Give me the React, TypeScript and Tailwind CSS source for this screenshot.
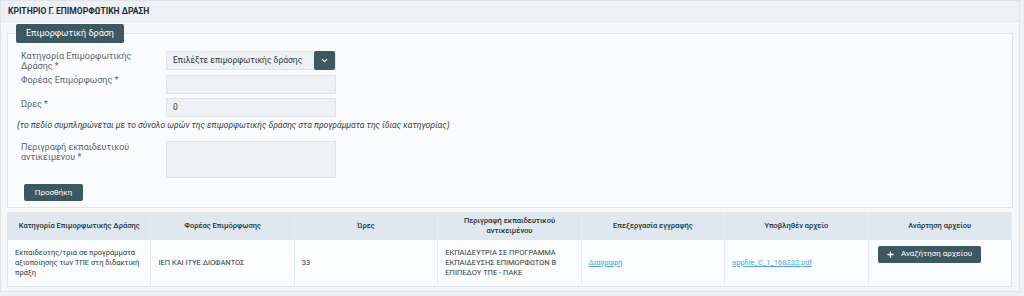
import { ChevronDown, Plus } from "lucide-react";

const headers: React.ReactNode[] = [
  "Κατηγορία Επιμορφωτικής Δράσης",
  "Φορέας Επιμόρφωσης",
  "Ώρες",
  <>
    Περιγραφή εκπαιδευτικού
    <br />
    αντικειμένου
  </>,
  "Επεξεργασία εγγραφής",
  "Υποβληθέν αρχείο",
  "Ανάρτηση αρχείου",
];

function Field({ label, children }: { label: React.ReactNode; children: React.ReactNode }) {
  return (
    <div className="flex h-[19px] items-start">
      <label className="w-[158px] shrink-0 pl-[13px] text-[9px] leading-[10px] text-[#5b656b]">{label}</label>
      {children}
    </div>
  );
}

export default function App() {
  return (
    <div className="h-[296px] w-[1024px] overflow-hidden bg-[#eef1f4] font-['Roboto',sans-serif]">
      <div className="w-[1020px] border border-[#dfe4e8] bg-[#f5f7f9]">
        <div className="h-[21px] border-b border-[#e3e8ec] bg-[#edf1f5] px-[7px] text-[8.5px] font-bold leading-[21px] text-[#1f2b30]">
          ΚΡΙΤΗΡΙΟ Γ. ΕΠΙΜΟΡΦΩΤΙΚΗ ΔΡΑΣΗ
        </div>
        <div className="px-[6px] pt-[2px] pb-[4px]">
          <fieldset className="border border-[#e2e5e9] bg-[#fafbfc] pb-[6px]">
            <legend className="ml-[8px] h-[19px] rounded-[2px] bg-[#3e5861] px-[10px] text-[9px] leading-[19px] text-white">
              Επιμορφωτική δράση
            </legend>
            <div className="mt-[8px] flex flex-col">
              <Field
                label={
                  <>
                    Κατηγορία Επιμορφωτικής
                    <br />
                    Δράσης *
                  </>
                }
              >
                <div className="flex h-[19px] w-[170px] items-center border border-[#e0e4e8] bg-[#eef1f4]">
                  <span className="flex-1 pl-[6px] text-[8.5px] text-[#2e383d]">Επιλέξτε επιμορφωτικής δράσης</span>
                  <span className="flex h-[19px] w-[21px] items-center justify-center rounded-[2px] bg-[#3e5861] text-white">
                    <ChevronDown size={9} strokeWidth={3} />
                  </span>
                </div>
              </Field>
              <div className="mt-[5px]">
                <Field label="Φορέας Επιμόρφωσης *">
                  <div className="h-[19px] w-[170px] border border-[#e0e4e8] bg-[#eef1f4]" />
                </Field>
              </div>
              <div className="mt-[4px]">
                <Field label={<span className="block pt-[1px]">Ώρες *</span>}>
                  <div className="h-[19px] w-[170px] border border-[#e0e4e8] bg-[#eef1f4] pl-[6px] text-[8.5px] leading-[17px] text-[#2e383d]">
                    0
                  </div>
                </Field>
              </div>
              <p className="ml-[9px] mt-[2px] text-[8.5px] italic leading-[12px] text-[#333c41]">
                (το πεδίο συμπληρώνεται με το σύνολο ωρών της επιμορφωτικής δράσης στα προγράμματα της ίδιας κατηγορίας)
              </p>
              <div className="mt-[10px] flex items-start">
                <label className="w-[158px] shrink-0 pl-[13px] pt-[1px] text-[9px] leading-[10px] text-[#5b656b]">
                  Περιγραφή εκπαιδευτικού
                  <br />
                  αντικειμένου *
                </label>
                <div className="h-[37px] w-[170px] border border-[#e0e4e8] bg-[#eef1f4]" />
              </div>
              <div className="mt-[6px] flex pl-[16px]">
                <button className="h-[17px] w-[59px] rounded-[2px] bg-[#3e5861] text-[8px] text-white">Προσθήκη</button>
              </div>
            </div>
          </fieldset>
          <table className="mt-[4px] w-[1005px] table-fixed border-collapse border border-[#e2e6ea] text-[7.5px] leading-[10px] text-[#2f3a3f]">
            <thead>
              <tr className="h-[27px] bg-[#dfe8ee]">
                {headers.map((h, i) => (
                  <th key={i} className="border-r border-[#e8edf0] px-[4px] text-center font-medium text-[#24343b]">
                    {h}
                  </th>
                ))}
              </tr>
            </thead>
            <tbody>
              <tr className="h-[47px] bg-[#fbfcfd]">
                <td className="border-r border-[#e8ecef] pl-[7px] pr-[3px]">
                  Εκπαιδευτής/τρια σε προγράμματα αξιοποίησης των ΤΠΕ στη διδακτική πράξη
                </td>
                <td className="border-r border-[#e8ecef] px-[7px]">ΙΕΠ ΚΑΙ ΙΤΥΕ ΔΙΟΦΑΝΤΟΣ</td>
                <td className="border-r border-[#e8ecef] px-[7px]">33</td>
                <td className="border-r border-[#e8ecef] pl-[7px] pr-[14px]">
                  ΕΚΠΑΙΔΕΥΤΡΙΑ ΣΕ ΠΡΟΓΡΑΜΜΑ ΕΚΠΑΙΔΕΥΣΗΣ ΕΠΙΜΟΡΦΩΤΩΝ Β ΕΠΙΠΕΔΟΥ ΤΠΕ - ΠΑΚΕ
                </td>
                <td className="border-r border-[#e8ecef] px-[7px]">
                  <a className="text-[#4da6d8] underline">Διαγραφή</a>
                </td>
                <td className="border-r border-[#e8ecef] px-[7px]">
                  <a className="text-[#4da6d8] underline">appfile_C_1_168232.pdf</a>
                </td>
                <td className="px-[9px] pt-[6px] align-top">
                  <button className="flex h-[17px] w-[103px] items-center justify-center gap-[6px] rounded-[2px] bg-[#3e5861] text-[8px] text-white">
                    <Plus size={9} strokeWidth={3.5} />
                    Αναζήτηση αρχείου
                  </button>
                </td>
              </tr>
            </tbody>
          </table>
        </div>
      </div>
    </div>
  );
}
